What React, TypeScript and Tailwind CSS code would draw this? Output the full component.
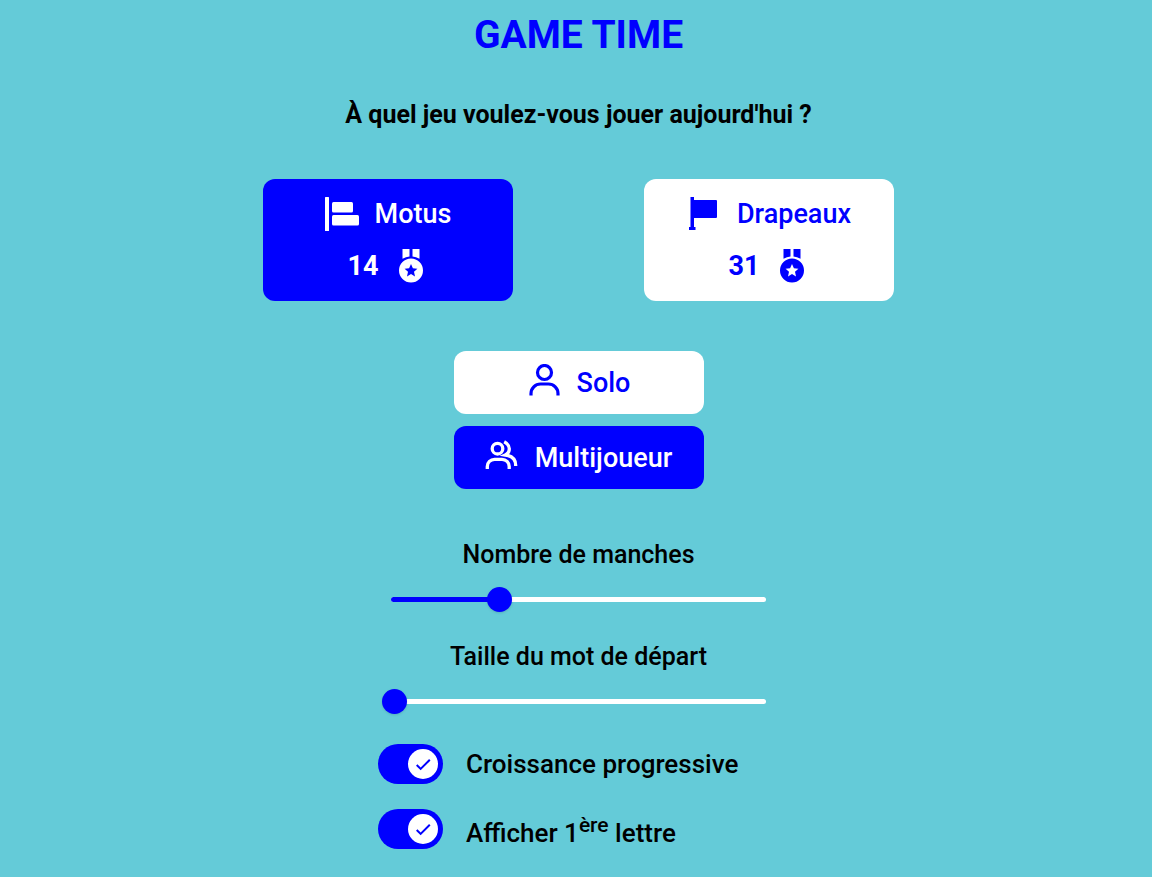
import { useId, useState, type ReactNode } from "react";

function WordIcon() {
  return (
    <svg width="34" height="34" viewBox="0 0 34 34" fill="currentColor" aria-hidden="true">
      <rect x="0" y="0" width="4" height="34" rx="0.5" />
      <rect x="7" y="5" width="21" height="10.5" rx="1.5" />
      <rect x="7" y="18" width="27" height="10.5" rx="1.5" />
    </svg>
  );
}

function FlagIcon() {
  return (
    <svg width="34" height="34" viewBox="0 0 34 34" fill="currentColor" aria-hidden="true">
      <path d="M3.500 0H7v3H29a1 1 0 0 1 1 1V20a1 1 0 0 1-1 1H7v9H8.500v3H2v-3H3.500z" />
    </svg>
  );
}

function MedalIcon() {
  return (
    <svg width="34" height="34" viewBox="0 0 34 34" fill="currentColor" aria-hidden="true">
      <path d="M8.500 0h7v7.600q-3.600.4-7 2.200zM18.500 0h7v9.800q-3.400-1.800-7-2.200z" />
      <path
        fillRule="evenodd"
        d="M17 9.500a12 12 0 1 1 0 24a12 12 0 0 1 0-24zM17 15l-1.900 4.200-4.500.5 3.400 3.100-1 4.600 4-2.300 4 2.300-1-4.600 3.400-3.100-4.500-.5z"
      />
    </svg>
  );
}

function UserIcon() {
  return (
    <svg width="34" height="34" viewBox="0 0 34 34" fill="none" stroke="currentColor" strokeWidth="3.2" aria-hidden="true">
      <circle cx="17.500" cy="8.500" r="7" />
      <path d="M4 31.500V29.500a9.500 9.500 0 0 1 9.500-9.500h8a9.500 9.500 0 0 1 9.500 9.500v2" />
    </svg>
  );
}

function UsersIcon() {
  return (
    <svg width="34" height="34" viewBox="0 0 34 34" fill="none" stroke="currentColor" strokeWidth="3.300" aria-hidden="true">
      <circle cx="12.500" cy="9.700" r="5.300" />
      <path d="M2.300 30v-2.500a7.200 7.200 0 0 1 7.200-7.200h7.500a7.200 7.200 0 0 1 7.200 7.200V30" />
      <path d="M19.200 2.800Q24.300 5.500 24.300 9.800T20.300 16Q31 17.500 30.700 27" />
    </svg>
  );
}

function ChoiceButton({ selected, onClick, children }: { selected: boolean; onClick: () => void; children: ReactNode }) {
  return (
    <button
      type="button"
      aria-pressed={selected}
      onClick={onClick}
      className={`flex w-[250px] flex-col items-center rounded-xl text-[27px] leading-9 font-medium ${
        selected ? "bg-[#0000ff] text-white" : "bg-white text-[#0000ff]"
      }`}
    >
      {children}
    </button>
  );
}

function GameButton({ icon, name, score, selected, onClick }: { icon: ReactNode; name: string; score: number; selected: boolean; onClick: () => void }) {
  return (
    <ChoiceButton selected={selected} onClick={onClick}>
      <span className="flex flex-col items-center gap-4 py-[17px]">
        <span className="flex items-center gap-4">
          {icon}
          {name}
        </span>
        <span className="flex items-center gap-4 font-bold">
          {score}
          <MedalIcon />
        </span>
      </span>
    </ChoiceButton>
  );
}

function ModeButton({ icon, name, selected, onClick }: { icon: ReactNode; name: string; selected: boolean; onClick: () => void }) {
  return (
    <ChoiceButton selected={selected} onClick={onClick}>
      <span className="flex items-start gap-4 pt-[13px] pb-3 leading-[38px]">
        {icon}
        {name}
      </span>
    </ChoiceButton>
  );
}

function RangeField({ label, max, initial }: { label: string; max: number; initial: number }) {
  const id = useId();
  const [value, setValue] = useState(initial);
  return (
    <div className="flex w-[375px] max-w-full flex-col items-center gap-[15px]">
      <label htmlFor={id}>{label}</label>
      <div className="grid w-full items-center">
        <div className="col-start-1 row-start-1 h-[5px] overflow-hidden rounded-full bg-white">
          <div className="h-full bg-[#0000ff]" style={{ width: `${(value / max) * 100}%` }} />
        </div>
        <input
          id={id}
          type="range"
          min={0}
          max={max}
          value={value}
          onChange={(e) => setValue(Number(e.target.value))}
          className="col-start-1 row-start-1 -mx-[9px] h-[26px] cursor-pointer appearance-none bg-transparent [&::-webkit-slider-thumb]:size-[25px] [&::-webkit-slider-thumb]:appearance-none [&::-webkit-slider-thumb]:rounded-full [&::-webkit-slider-thumb]:bg-[#0000ff] [&::-webkit-slider-thumb]:shadow-sm"
        />
      </div>
    </div>
  );
}

function SwitchField({ children }: { children: ReactNode }) {
  const id = useId();
  const [on, setOn] = useState(true);
  return (
    <div className="flex items-center gap-[23px]">
      <div className="grid shrink-0 items-center">
        <input
          id={id}
          type="checkbox"
          role="switch"
          checked={on}
          onChange={(e) => setOn(e.target.checked)}
          className="peer col-start-1 row-start-1 h-10 w-[65px] cursor-pointer appearance-none rounded-full bg-slate-400 checked:bg-[#0000ff]"
        />
        <span className="pointer-events-none col-start-1 row-start-1 mx-[5px] flex size-[30px] items-center justify-center rounded-full bg-white text-[#0000ff] peer-checked:justify-self-end">
          {on && (
            <svg width="20" height="20" viewBox="0 0 24 24" fill="currentColor" aria-hidden="true">
              <path d="M9.200 16.200 5.300 12.300 3.600 14 9.200 19.600 21 7.800l-1.700-1.700z" />
            </svg>
          )}
        </span>
      </div>
      <label htmlFor={id} className="text-[26px]">
        {children}
      </label>
    </div>
  );
}

export default function App() {
  const [game, setGame] = useState("Motus");
  const [mode, setMode] = useState("Multijoueur");
  return (
    <main className="flex min-h-screen flex-col items-center bg-[#64cbd8] pt-3 pb-7 pl-[5px] font-['Roboto',sans-serif] text-[25px] leading-8 font-medium text-black">
      <h1 className="text-[39px] leading-[46px] font-bold text-[#0000ff]">GAME TIME</h1>
      <h2 className="mt-[41px] text-[25px] leading-8 font-bold">À quel jeu voulez-vous jouer aujourd'hui ?</h2>
      <div className="mt-12 flex flex-wrap justify-center gap-x-[131px] gap-y-3">
        <GameButton icon={<WordIcon />} name="Motus" score={14} selected={game === "Motus"} onClick={() => setGame("Motus")} />
        <GameButton icon={<FlagIcon />} name="Drapeaux" score={31} selected={game === "Drapeaux"} onClick={() => setGame("Drapeaux")} />
      </div>
      <div className="mt-[50px] flex flex-col gap-3">
        <ModeButton icon={<UserIcon />} name="Solo" selected={mode === "Solo"} onClick={() => setMode("Solo")} />
        <ModeButton icon={<UsersIcon />} name="Multijoueur" selected={mode === "Multijoueur"} onClick={() => setMode("Multijoueur")} />
      </div>
      <div className="mt-[50px] flex w-full flex-col items-center gap-[29px]">
        <RangeField label="Nombre de manches" max={7} initial={2} />
        <RangeField label="Taille du mot de départ" max={7} initial={0} />
      </div>
      <div className="mt-[30px] flex w-[401px] max-w-full flex-col gap-[25px]">
        <SwitchField>Croissance progressive</SwitchField>
        <SwitchField>
          Afficher 1<sup className="static align-super text-[21px] leading-8">ère</sup> lettre
        </SwitchField>
      </div>
    </main>
  );
}
